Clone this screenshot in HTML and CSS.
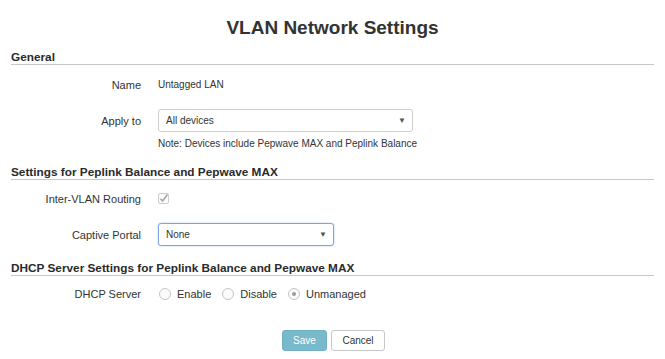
FILE: index.html
```html
<!DOCTYPE html>
<html>
<head>
<meta charset="utf-8">
<link rel="stylesheet" href="styles.css">
</head>
<body>
<div class="page">
  <h1 class="title">VLAN Network Settings</h1>

  <div class="section">
    <div class="section-head">General</div>
    <div class="form">
      <div class="row row-name">
        <div class="label">Name</div>
        <div class="value">Untagged LAN</div>
      </div>
      <div class="row row-select">
        <div class="label">Apply to</div>
        <div class="value">
          <div class="select select-wide"><span>All devices</span><span class="arrow">&#9660;</span></div>
        </div>
      </div>
      <div class="row row-note">
        <div class="label"></div>
        <div class="value">Note: Devices include Pepwave MAX and Peplink Balance</div>
      </div>
    </div>
  </div>

  <div class="section">
    <div class="section-head">Settings for Peplink Balance and Pepwave MAX</div>
    <div class="form">
      <div class="row row-check">
        <div class="label">Inter-VLAN Routing</div>
        <div class="value">
          <span class="checkbox"><svg width="11" height="11" viewBox="0 0 11 11"><rect x="0.5" y="0.5" width="10" height="10" rx="1.5" fill="#fbfbfb" stroke="#cdcdcd"/><path d="M2.5 5.8 L4.6 8 L9.4 1.6" fill="none" stroke="#a9a9a9" stroke-width="1.6"/></svg></span>
        </div>
      </div>
      <div class="row row-select row-captive">
        <div class="label">Captive Portal</div>
        <div class="value">
          <div class="select select-focus"><span>None</span><span class="arrow">&#9660;</span></div>
        </div>
      </div>
    </div>
  </div>

  <div class="section">
    <div class="section-head">DHCP Server Settings for Peplink Balance and Pepwave MAX</div>
    <div class="form">
      <div class="row row-radio">
        <div class="label">DHCP Server</div>
        <div class="value radios">
          <label class="radio"><span class="circle"></span>Enable</label>
          <label class="radio"><span class="circle"></span>Disable</label>
          <label class="radio"><span class="circle checked"></span>Unmanaged</label>
        </div>
      </div>
    </div>
  </div>

  <div class="actions">
    <button class="btn btn-save">Save</button>
    <button class="btn btn-cancel">Cancel</button>
  </div>
</div>
</body>
</html>
```

FILE: styles.css
```css
* { box-sizing: border-box; }
html, body { margin: 0; padding: 0; background: #fff; }
body {
  font-family: "Liberation Sans", Arial, sans-serif;
  color: #333;
  width: 665px;
  height: 359px;
  overflow: hidden;
}
.page { padding: 0 11px; }
.title {
  margin: 0;
  padding-top: 16px;
  height: 51px;
  font-size: 19px;
  line-height: 24px;
  font-weight: bold;
  text-align: center;
  color: #333;
}
.section-head {
  font-size: 11.8px;
  font-weight: bold;
  line-height: 12px;
  padding-bottom: 1px;
  border-bottom: 1px solid #c8c8c8;
  color: #2a2a2a;
}
.form { display: flex; flex-direction: column; }
.row {
  display: grid;
  grid-template-columns: 130px 1fr;
  column-gap: 17px;
  align-items: center;
}
.label {
  text-align: right;
  font-size: 11px;
  color: #333;
}
.value { font-size: 10px; color: #333; }

.row-name { height: 39px; }
.row-select { height: 33px; }
.row-note { height: 29px; align-items: start; line-height: 14px; }

.select {
  display: flex;
  align-items: center;
  justify-content: space-between;
  height: 23px;
  border: 1px solid #cfcfcf;
  border-radius: 3px;
  padding: 0 6px 0 7px;
  font-size: 10px;
  color: #333;
  background: #fff;
}
.select-wide { width: 255px; }
.select-focus { width: 176px; border-color: #7da6e0; box-shadow: 0 0 2px rgba(102,150,230,0.5); }
.arrow { font-size: 8px; color: #555; }

.row-check { height: 38px; }
.checkbox { display: inline-flex; }
.row-captive { margin-bottom: 11px; }

.row-radio { height: 36px; }
.radios { display: flex; align-items: center; font-size: 11px; }
.radio { display: inline-flex; align-items: center; margin-right: 10px; }
.circle {
  display: inline-block;
  width: 12px;
  height: 12px;
  border: 1px solid #c6c6c6;
  border-radius: 50%;
  margin: 0 6px 0 1px;
  background: #fbfbfb;
  position: relative;
}
.circle.checked::after {
  content: "";
  position: absolute;
  left: 3px; top: 3px;
  width: 4px; height: 4px;
  border-radius: 50%;
  background: #9a9a9a;
}

.actions {
  display: flex;
  justify-content: center;
  gap: 4px;
  padding-top: 18px;
  padding-left: 2px;
}
.btn {
  font-family: "Liberation Sans", Arial, sans-serif;
  font-size: 10px;
  height: 21px;
  border-radius: 3px;
  padding: 0;
}
.btn-save {
  width: 45px;
  background: #79b9cc;
  border: 1px solid #70b0c4;
  color: #fff;
}
.btn-cancel {
  width: 54px;
  background: #fff;
  border: 1px solid #c8c8c8;
  color: #333;
}
```
